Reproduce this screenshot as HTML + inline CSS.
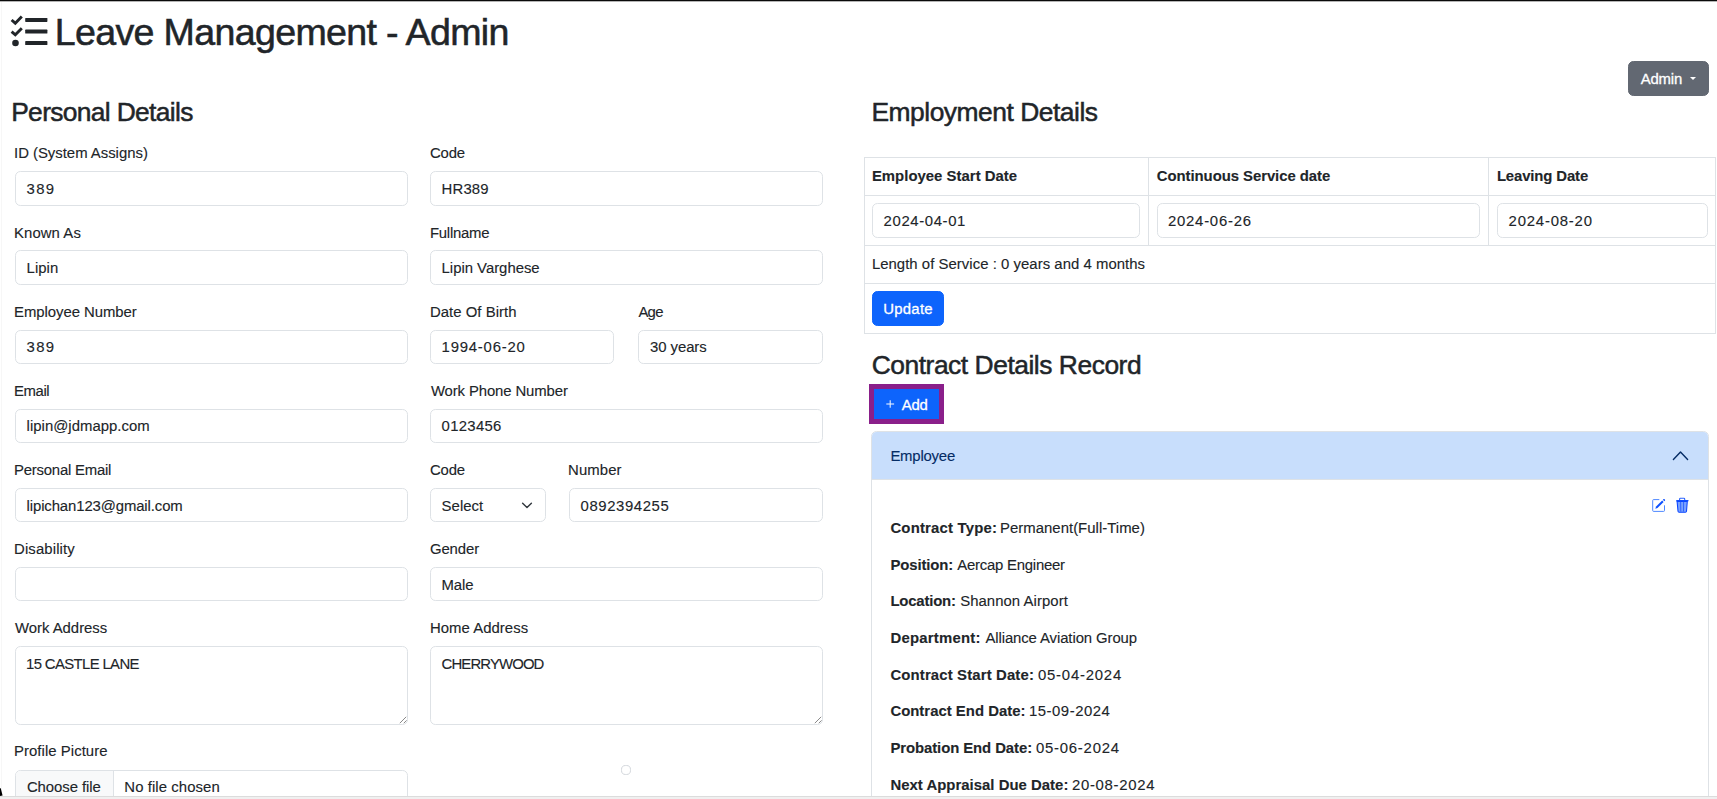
<!DOCTYPE html>
<html><head><meta charset="utf-8"><title>Leave Management - Admin</title>
<style>
html,body{margin:0;padding:0;}
body{width:1717px;height:799px;overflow:hidden;position:relative;background:#fff;font-family:"Liberation Sans",sans-serif;color:#212529;}
.t{position:absolute;white-space:pre;-webkit-text-stroke:0.12px currentColor;}
.t b{font-weight:700;}
.b{position:absolute;box-sizing:border-box;border:1px solid #dee2e6;}
.r{position:absolute;}
svg{overflow:visible;}
</style></head><body>
<div class="r" style="left:0.00px;top:0.00px;width:1717.00px;height:1.00px;background:#0a0a0a;"></div>
<div class="r" style="left:0.00px;top:1.00px;width:1717.00px;height:1.00px;background:#b4b4b4;"></div>
<div class="r" style="left:1.00px;top:2.00px;width:1.00px;height:794.00px;background:#f7f7f7;"></div>
<svg style="position:absolute;left:0;top:0" width="60" height="60" viewBox="0 0 60 60">
<g fill="none" stroke="#212529" stroke-width="2.9" stroke-linecap="butt" stroke-linejoin="miter">
<polyline points="11.6,20 15.3,23.2 21.8,16.6"/>
<polyline points="11.6,31.6 15.3,34.8 21.8,28.2"/>
</g>
<circle cx="15.5" cy="43" r="3.3" fill="#212529"/>
<g fill="#212529"><rect x="25.2" y="18.0" width="22.2" height="3.9" rx="0.6"/><rect x="25.2" y="29.6" width="22.2" height="3.9" rx="0.6"/><rect x="25.2" y="41.1" width="22.2" height="3.9" rx="0.6"/></g>
</svg>
<div class="t" id="t0" style="left:54.80px;top:5.50px;font-size:37.6px;line-height:53px;color:#212529;letter-spacing:-0.670px;-webkit-text-stroke:0.55px #212529;">Leave Management - Admin</div>
<div class="b" style="left:1628.00px;top:60.90px;width:80.90px;height:35.10px;border-color:#626872;background:#626872;border-radius:5.4px;"></div>
<div class="t" id="t1" style="left:1640.70px;top:68.50px;font-size:14.9px;line-height:21px;color:#fff;letter-spacing:-0.150px;-webkit-text-stroke:0.3px #fff;">Admin</div>
<div class="r" style="left:1689.5px;top:76.7px;width:0;height:0;border-left:3.9px solid transparent;border-right:3.9px solid transparent;border-top:3.9px solid #fff;background:none"></div>
<div class="t" id="t2" style="left:11.20px;top:93.50px;font-size:26.4px;line-height:37px;color:#212529;letter-spacing:-0.667px;-webkit-text-stroke:0.5px #212529;">Personal Details</div>
<div class="t" id="t3" style="left:871.40px;top:93.50px;font-size:26.4px;line-height:37px;color:#212529;letter-spacing:-0.471px;-webkit-text-stroke:0.5px #212529;">Employment Details</div>
<div class="t" id="t4" style="left:871.70px;top:346.50px;font-size:26.4px;line-height:37px;color:#212529;letter-spacing:-0.464px;-webkit-text-stroke:0.5px #212529;">Contract Details Record</div>
<div class="t" id="t5" style="left:14.00px;top:142.50px;font-size:14.9px;line-height:21px;color:#212529;letter-spacing:-0.011px;">ID (System Assigns)</div>
<div class="t" id="t6" style="left:429.90px;top:142.50px;font-size:14.9px;line-height:21px;color:#212529;letter-spacing:-0.133px;">Code</div>
<div class="b" style="left:15.00px;top:171.30px;width:392.60px;height:34.30px;border-color:#dee2e6;background:#fff;border-radius:5.4px;"></div>
<div class="t" id="t7" style="left:26.60px;top:178.50px;font-size:14.9px;line-height:21px;color:#212529;letter-spacing:1.300px;">389</div>
<div class="b" style="left:430.40px;top:171.30px;width:392.60px;height:34.30px;border-color:#dee2e6;background:#fff;border-radius:5.4px;"></div>
<div class="t" id="t8" style="left:441.60px;top:178.50px;font-size:14.9px;line-height:21px;color:#212529;letter-spacing:0.150px;">HR389</div>
<div class="t" id="t9" style="left:14.00px;top:222.50px;font-size:14.9px;line-height:21px;color:#212529;letter-spacing:0.086px;">Known As</div>
<div class="t" id="t10" style="left:429.90px;top:222.50px;font-size:14.9px;line-height:21px;color:#212529;letter-spacing:-0.229px;">Fullname</div>
<div class="b" style="left:15.00px;top:250.45px;width:392.60px;height:34.30px;border-color:#dee2e6;background:#fff;border-radius:5.4px;"></div>
<div class="t" id="t11" style="left:26.60px;top:257.50px;font-size:14.9px;line-height:21px;color:#212529;letter-spacing:0.050px;">Lipin</div>
<div class="b" style="left:430.40px;top:250.45px;width:392.60px;height:34.30px;border-color:#dee2e6;background:#fff;border-radius:5.4px;"></div>
<div class="t" id="t12" style="left:441.60px;top:257.50px;font-size:14.9px;line-height:21px;color:#212529;letter-spacing:-0.015px;">Lipin Varghese</div>
<div class="t" id="t13" style="left:14.00px;top:301.50px;font-size:14.9px;line-height:21px;color:#212529;letter-spacing:-0.043px;">Employee Number</div>
<div class="t" id="t14" style="left:429.90px;top:301.50px;font-size:14.9px;line-height:21px;color:#212529;letter-spacing:0.050px;">Date Of Birth</div>
<div class="t" id="t15" style="left:638.40px;top:301.50px;font-size:14.9px;line-height:21px;color:#212529;letter-spacing:-0.700px;">Age</div>
<div class="b" style="left:15.00px;top:329.60px;width:392.60px;height:34.30px;border-color:#dee2e6;background:#fff;border-radius:5.4px;"></div>
<div class="t" id="t16" style="left:26.60px;top:336.50px;font-size:14.9px;line-height:21px;color:#212529;letter-spacing:1.300px;">389</div>
<div class="b" style="left:430.40px;top:329.60px;width:183.90px;height:34.30px;border-color:#dee2e6;background:#fff;border-radius:5.4px;"></div>
<div class="t" id="t17" style="left:441.60px;top:336.50px;font-size:14.9px;line-height:21px;color:#212529;letter-spacing:0.778px;">1994-06-20</div>
<div class="b" style="left:637.50px;top:329.60px;width:185.50px;height:34.30px;border-color:#dee2e6;background:#fff;border-radius:5.4px;"></div>
<div class="t" id="t18" style="left:650.00px;top:336.50px;font-size:14.9px;line-height:21px;color:#212529;letter-spacing:-0.057px;">30 years</div>
<div class="t" id="t19" style="left:14.00px;top:380.50px;font-size:14.9px;line-height:21px;color:#212529;letter-spacing:-0.400px;">Email</div>
<div class="t" id="t20" style="left:430.90px;top:380.50px;font-size:14.9px;line-height:21px;color:#212529;letter-spacing:-0.113px;">Work Phone Number</div>
<div class="b" style="left:15.00px;top:408.75px;width:392.60px;height:34.30px;border-color:#dee2e6;background:#fff;border-radius:5.4px;"></div>
<div class="t" id="t21" style="left:26.60px;top:415.50px;font-size:14.9px;line-height:21px;color:#212529;letter-spacing:0.027px;">lipin@jdmapp.com</div>
<div class="b" style="left:430.40px;top:408.75px;width:392.60px;height:34.30px;border-color:#dee2e6;background:#fff;border-radius:5.4px;"></div>
<div class="t" id="t22" style="left:441.60px;top:415.50px;font-size:14.9px;line-height:21px;color:#212529;letter-spacing:0.300px;">0123456</div>
<div class="t" id="t23" style="left:14.00px;top:459.50px;font-size:14.9px;line-height:21px;color:#212529;letter-spacing:-0.215px;">Personal Email</div>
<div class="t" id="t24" style="left:429.90px;top:459.50px;font-size:14.9px;line-height:21px;color:#212529;letter-spacing:-0.133px;">Code</div>
<div class="t" id="t25" style="left:568.10px;top:459.50px;font-size:14.9px;line-height:21px;color:#212529;letter-spacing:0.080px;">Number</div>
<div class="b" style="left:15.00px;top:487.90px;width:392.60px;height:34.30px;border-color:#dee2e6;background:#fff;border-radius:5.4px;"></div>
<div class="t" id="t26" style="left:26.60px;top:495.50px;font-size:14.9px;line-height:21px;color:#212529;letter-spacing:-0.110px;">lipichan123@gmail.com</div>
<div class="b" style="left:430.40px;top:487.90px;width:115.40px;height:34.30px;border-color:#dee2e6;background:#fff;border-radius:5.4px;"></div>
<div class="t" id="t27" style="left:441.60px;top:495.50px;font-size:14.9px;line-height:21px;color:#212529;letter-spacing:0.040px;">Select</div>
<div class="b" style="left:568.70px;top:487.90px;width:254.30px;height:34.30px;border-color:#dee2e6;background:#fff;border-radius:5.4px;"></div>
<div class="t" id="t28" style="left:580.50px;top:495.50px;font-size:14.9px;line-height:21px;color:#212529;letter-spacing:0.600px;">0892394255</div>
<svg style="position:absolute;left:518px;top:498px" width="18" height="14" viewBox="0 0 18 14"><polyline points="4.6,5.2 9,9.6 13.4,5.2" fill="none" stroke="#343a40" stroke-width="1.45" stroke-linecap="round" stroke-linejoin="round"/></svg>
<div class="t" id="t29" style="left:14.00px;top:538.50px;font-size:14.9px;line-height:21px;color:#212529;letter-spacing:0.133px;">Disability</div>
<div class="t" id="t30" style="left:429.90px;top:538.50px;font-size:14.9px;line-height:21px;color:#212529;letter-spacing:-0.080px;">Gender</div>
<div class="b" style="left:15.00px;top:567.05px;width:392.60px;height:34.30px;border-color:#dee2e6;background:#fff;border-radius:5.4px;"></div>
<div class="b" style="left:430.40px;top:567.05px;width:392.60px;height:34.30px;border-color:#dee2e6;background:#fff;border-radius:5.4px;"></div>
<div class="t" id="t31" style="left:441.60px;top:574.50px;font-size:14.9px;line-height:21px;color:#212529;letter-spacing:-0.133px;">Male</div>
<div class="t" id="t32" style="left:15.00px;top:617.50px;font-size:14.9px;line-height:21px;color:#212529;letter-spacing:-0.018px;">Work Address</div>
<div class="t" id="t33" style="left:429.90px;top:617.50px;font-size:14.9px;line-height:21px;color:#212529;letter-spacing:0.055px;">Home Address</div>
<div class="b" style="left:15.00px;top:646.00px;width:392.60px;height:79.00px;border-color:#dee2e6;background:#fff;border-radius:5.4px;"></div>
<div class="b" style="left:430.40px;top:646.00px;width:392.60px;height:79.00px;border-color:#dee2e6;background:#fff;border-radius:5.4px;"></div>
<div class="t" id="t34" style="left:26.00px;top:653.50px;font-size:14.9px;line-height:21px;color:#212529;letter-spacing:-0.631px;">15 CASTLE LANE</div>
<div class="t" id="t35" style="left:441.60px;top:653.50px;font-size:14.9px;line-height:21px;color:#212529;letter-spacing:-0.867px;">CHERRYWOOD</div>
<svg style="position:absolute;left:398.6px;top:715px" width="9" height="9" viewBox="0 0 9 9"><line x1="0.8" y1="8.2" x2="7.2" y2="1.8" stroke="#6b6b6b" stroke-width="0.8"/><line x1="4.8" y1="8.2" x2="7.6" y2="5.4" stroke="#6b6b6b" stroke-width="0.8"/></svg>
<svg style="position:absolute;left:814.0px;top:715px" width="9" height="9" viewBox="0 0 9 9"><line x1="0.8" y1="8.2" x2="7.2" y2="1.8" stroke="#6b6b6b" stroke-width="0.8"/><line x1="4.8" y1="8.2" x2="7.6" y2="5.4" stroke="#6b6b6b" stroke-width="0.8"/></svg>
<div class="t" id="t36" style="left:14.00px;top:740.50px;font-size:14.9px;line-height:21px;color:#212529;letter-spacing:0.057px;">Profile Picture</div>
<div class="b" style="left:15.00px;top:769.60px;width:392.60px;height:34.40px;border-color:#dee2e6;background:#fff;border-radius:5.4px;"></div>
<div class="r" style="left:16.00px;top:770.60px;width:96.60px;height:32.40px;background:#f8f9fa;border-top-left-radius:4.5px;"></div>
<div class="r" style="left:112.60px;top:770.60px;width:0.90px;height:32.40px;background:#dee2e6;"></div>
<div class="t" id="t37" style="left:26.90px;top:776.50px;font-size:14.9px;line-height:21px;color:#212529;letter-spacing:-0.060px;">Choose file</div>
<div class="t" id="t38" style="left:124.30px;top:776.50px;font-size:14.9px;line-height:21px;color:#212529;letter-spacing:0.077px;">No file chosen</div>
<div class="r" style="left:621.4px;top:765.4px;width:9.2px;height:9.2px;box-sizing:border-box;border:1px solid #d3d7dc;border-radius:50%;background:#fff"></div>
<div class="r" style="left:864.00px;top:157.00px;width:852.00px;height:1.00px;background:#dee2e6;"></div>
<div class="r" style="left:864.00px;top:194.50px;width:852.00px;height:1.00px;background:#dee2e6;"></div>
<div class="r" style="left:864.00px;top:245.00px;width:852.00px;height:1.00px;background:#dee2e6;"></div>
<div class="r" style="left:864.00px;top:283.00px;width:852.00px;height:1.00px;background:#dee2e6;"></div>
<div class="r" style="left:864.00px;top:333.00px;width:852.00px;height:1.00px;background:#dee2e6;"></div>
<div class="r" style="left:864.00px;top:157.00px;width:1.00px;height:177.00px;background:#dee2e6;"></div>
<div class="r" style="left:1715.00px;top:157.00px;width:1.00px;height:177.00px;background:#dee2e6;"></div>
<div class="r" style="left:1148.00px;top:157.00px;width:1.00px;height:89.00px;background:#dee2e6;"></div>
<div class="r" style="left:1488.00px;top:157.00px;width:1.00px;height:89.00px;background:#dee2e6;"></div>
<div class="t" id="t39" style="left:871.90px;top:165.50px;font-size:14.9px;line-height:21px;color:#212529;font-weight:700;letter-spacing:0.022px;">Employee Start Date</div>
<div class="t" id="t40" style="left:1156.80px;top:165.50px;font-size:14.9px;line-height:21px;color:#212529;font-weight:700;letter-spacing:-0.055px;">Continuous Service date</div>
<div class="t" id="t41" style="left:1496.90px;top:165.50px;font-size:14.9px;line-height:21px;color:#212529;font-weight:700;letter-spacing:-0.127px;">Leaving Date</div>
<div class="b" style="left:872.30px;top:203.00px;width:267.50px;height:35.00px;border-color:#dee2e6;background:#fff;border-radius:5.4px;"></div>
<div class="b" style="left:1156.50px;top:203.00px;width:323.50px;height:35.00px;border-color:#dee2e6;background:#fff;border-radius:5.4px;"></div>
<div class="b" style="left:1496.50px;top:203.00px;width:211.10px;height:35.00px;border-color:#dee2e6;background:#fff;border-radius:5.4px;"></div>
<div class="t" id="t42" style="left:883.60px;top:210.50px;font-size:14.9px;line-height:21px;color:#212529;letter-spacing:0.622px;">2024-04-01</div>
<div class="t" id="t43" style="left:1167.90px;top:210.50px;font-size:14.9px;line-height:21px;color:#212529;letter-spacing:0.778px;">2024-06-26</div>
<div class="t" id="t44" style="left:1508.60px;top:210.50px;font-size:14.9px;line-height:21px;color:#212529;letter-spacing:0.800px;">2024-08-20</div>
<div class="t" id="t45" style="left:871.90px;top:253.50px;font-size:14.9px;line-height:21px;color:#212529;letter-spacing:0.041px;">Length of Service : 0 years and 4 months</div>
<div class="b" style="left:872.00px;top:290.90px;width:72.20px;height:35.10px;border-color:#0d64fc;background:#0d64fc;border-radius:5.4px;"></div>
<div class="t" id="t46" style="left:883.20px;top:298.50px;font-size:14.9px;line-height:21px;color:#fff;letter-spacing:0.280px;-webkit-text-stroke:0.3px #fff;">Update</div>
<div class="r" style="left:869.30px;top:384.30px;width:74.50px;height:39.40px;background:#8a1f8a;"></div>
<div class="r" style="left:874.10px;top:388.90px;width:65.20px;height:30.20px;background:#0d64fc;"></div>
<svg style="position:absolute;left:884px;top:398px" width="12" height="12" viewBox="0 0 12 12"><g stroke="#e6efff" stroke-width="1.1"><line x1="2.3" y1="6" x2="10.1" y2="6"/><line x1="6.2" y1="2.3" x2="6.2" y2="9.8"/></g></svg>
<div class="t" id="t47" style="left:901.80px;top:394.50px;font-size:14.9px;line-height:21px;color:#fff;letter-spacing:-0.300px;-webkit-text-stroke:0.3px #fff;">Add</div>
<div class="b" style="left:871.30px;top:431.30px;width:837.30px;height:398.70px;border-color:#dee2e6;background:#fff;border-radius:5.4px;"></div>
<div class="r" style="left:872.30px;top:432.30px;width:835.30px;height:46.60px;background:#c8defc;border-top-left-radius:4.4px;border-top-right-radius:4.4px;"></div>
<div class="r" style="left:872.30px;top:478.90px;width:835.30px;height:1.00px;background:#dee2e6;"></div>
<div class="t" id="t48" style="left:890.40px;top:445.50px;font-size:14.9px;line-height:21px;color:#052c65;letter-spacing:-0.200px;">Employee</div>
<svg style="position:absolute;left:1670px;top:447px" width="21" height="16" viewBox="0 0 21 16"><polyline points="3.4,12.6 10.5,5 17.6,12.6" fill="none" stroke="#052c65" stroke-width="1.4" stroke-linecap="round" stroke-linejoin="round"/></svg>
<svg style="position:absolute;left:1650px;top:496px" width="18" height="18" viewBox="0 0 18 18">
<path d="M9.3,3.6 H3.6 Q2.7,3.6 2.7,4.5 V14.5 Q2.7,15.4 3.6,15.4 H13.6 Q14.5,15.4 14.5,14.5 V9.3" fill="none" stroke="#3a7bff" stroke-width="0.9"/>
<path d="M5.3,12.8 L6.1,10.6 L12.2,4.5 L13.6,5.9 L7.5,12 Z" fill="#0d50ff"/>
<path d="M12.9,3.8 L13.6,3.1 Q14,2.8 14.4,3.1 L15,3.7 Q15.3,4.1 15,4.5 L14.3,5.2 Z" fill="#0d50ff"/>
</svg>
<svg style="position:absolute;left:1674px;top:496px" width="18" height="18" viewBox="0 0 18 18">
<path d="M5.6,4.4 V3.1 Q5.6,2.3 6.4,2.3 H9.9 Q10.7,2.3 10.7,3.1 V4.4" fill="none" stroke="#2b63ff" stroke-width="1.1"/>
<path d="M2.1,4.2 Q2.1,3.9 2.5,3.9 H14.2 Q14.6,3.9 14.6,4.2 L14.2,5.6 H2.5 Z" fill="#0f4dff"/>
<path d="M3.1,5.4 H13.3 L12.5,15.2 Q12.4,16.2 11.4,16.2 H5.1 Q4.1,16.2 4,15.2 Z" fill="#7aa2ff"/>
<path d="M3.1,5.4 H13.3 L12.5,15.2 Q12.4,16.2 11.4,16.2 H5.1 Q4.1,16.2 4,15.2 Z" fill="none" stroke="#0a45ff" stroke-width="1.05"/>
<g stroke="#1c55ff" stroke-width="0.8"><line x1="6.6" y1="5.6" x2="6.8" y2="15.6"/><line x1="9.6" y1="5.6" x2="9.5" y2="15.6"/></g>
</svg>
<div class="t" id="t49" style="left:890.40px;top:517.50px;font-size:14.9px;line-height:21px;color:#212529;font-weight:700;letter-spacing:0.200px;">Contract Type:</div>
<div class="t" id="t50" style="left:1000.00px;top:517.50px;font-size:14.9px;line-height:21px;color:#212529;letter-spacing:0.032px;">Permanent(Full-Time)</div>
<div class="t" id="t51" style="left:890.40px;top:554.50px;font-size:14.9px;line-height:21px;color:#212529;font-weight:700;letter-spacing:-0.100px;">Position:</div>
<div class="t" id="t52" style="left:957.30px;top:554.50px;font-size:14.9px;line-height:21px;color:#212529;letter-spacing:-0.229px;">Aercap Engineer</div>
<div class="t" id="t53" style="left:890.40px;top:590.50px;font-size:14.9px;line-height:21px;color:#212529;font-weight:700;letter-spacing:-0.175px;">Location:</div>
<div class="t" id="t54" style="left:960.20px;top:590.50px;font-size:14.9px;line-height:21px;color:#212529;letter-spacing:0.057px;">Shannon Airport</div>
<div class="t" id="t55" style="left:890.40px;top:627.50px;font-size:14.9px;line-height:21px;color:#212529;font-weight:700;letter-spacing:0.240px;">Department:</div>
<div class="t" id="t56" style="left:985.40px;top:627.50px;font-size:14.9px;line-height:21px;color:#212529;letter-spacing:-0.091px;">Alliance Aviation Group</div>
<div class="t" id="t57" style="left:890.40px;top:664.50px;font-size:14.9px;line-height:21px;color:#212529;font-weight:700;letter-spacing:0.147px;">Contract Start Date:</div>
<div class="t" id="t58" style="left:1038.00px;top:664.50px;font-size:14.9px;line-height:21px;color:#212529;letter-spacing:0.778px;">05-04-2024</div>
<div class="t" id="t59" style="left:890.40px;top:700.50px;font-size:14.9px;line-height:21px;color:#212529;font-weight:700;letter-spacing:0.012px;">Contract End Date:</div>
<div class="t" id="t60" style="left:1028.90px;top:700.50px;font-size:14.9px;line-height:21px;color:#212529;letter-spacing:0.533px;">15-09-2024</div>
<div class="t" id="t61" style="left:890.40px;top:737.50px;font-size:14.9px;line-height:21px;color:#212529;font-weight:700;letter-spacing:-0.078px;">Probation End Date:</div>
<div class="t" id="t62" style="left:1035.90px;top:737.50px;font-size:14.9px;line-height:21px;color:#212529;letter-spacing:0.778px;">05-06-2024</div>
<div class="t" id="t63" style="left:890.40px;top:774.50px;font-size:14.9px;line-height:21px;color:#212529;font-weight:700;letter-spacing:0.026px;">Next Appraisal Due Date:</div>
<div class="t" id="t64" style="left:1071.90px;top:774.50px;font-size:14.9px;line-height:21px;color:#212529;letter-spacing:0.711px;">20-08-2024</div>
<svg style="position:absolute;left:0;top:786px" width="6" height="12"><polygon points="0,2 0.8,2.5 2.6,9.6 0,10" fill="#000"/></svg>
<div class="r" style="left:0.00px;top:796.00px;width:1717.00px;height:1.00px;background:#dcdcdc;"></div>
<div class="r" style="left:0.00px;top:797.00px;width:1717.00px;height:2.00px;background:#f0f0f0;"></div>
</body></html>
